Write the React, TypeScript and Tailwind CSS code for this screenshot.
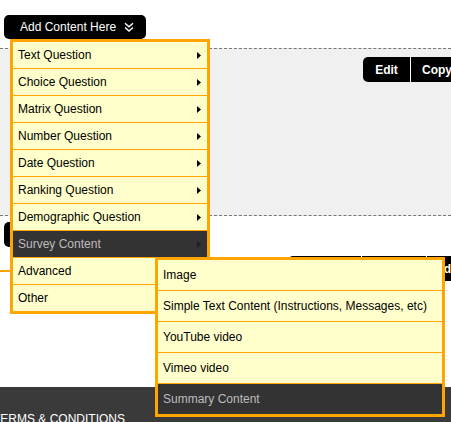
import React from "react";

const mainItems = [
  "Text Question",
  "Choice Question",
  "Matrix Question",
  "Number Question",
  "Date Question",
  "Ranking Question",
  "Demographic Question",
  "Survey Content",
  "Advanced",
  "Other",
];

const subItems = [
  "Image",
  "Simple Text Content (Instructions, Messages, etc)",
  "YouTube video",
  "Vimeo video",
  "Summary Content",
];

function Arrow({ dark }: { dark?: boolean }) {
  return (
    <svg width="4" height="7" viewBox="0 0 4 7" className="flex-none">
      <polygon points="0,0 4,3.5 0,7" fill={dark ? "#1e1e1e" : "#000"} />
    </svg>
  );
}

function Chevrons() {
  return (
    <svg
      width="10"
      height="10"
      viewBox="0 0 10 10"
      fill="none"
      stroke="white"
      strokeWidth={1.4}
      className="ml-2"
    >
      <path d="M1 1.2 L5 4.8 L9 1.2" />
      <path d="M1 5.4 L5 9 L9 5.4" />
    </svg>
  );
}

function SubMenu() {
  return (
    <ul className="absolute left-[142px] top-[26px] z-20 w-[290px] border-[3px] border-[#ffa500] bg-[#ffffcc]">
      {subItems.map((label) => {
        const active = label === "Summary Content";
        return (
          <li
            key={label}
            className={`flex h-[31px] items-center border-b border-[#ffa500] pl-[5px] last:h-[30px] last:border-b-0 ${
              active ? "bg-[#333333] text-[#bdbdbd]" : "text-black"
            }`}
          >
            {label}
          </li>
        );
      })}
    </ul>
  );
}

function Menu() {
  return (
    <ul className="absolute left-[6px] top-full z-10 w-[200px] border-[3px] border-[#ffa500] bg-[#ffffcc]">
      {mainItems.map((label) => {
        const active = label === "Survey Content";
        return (
          <li
            key={label}
            className={`relative flex h-[27px] items-center justify-between border-b border-[#ffa500] pl-[5px] pr-[6px] last:h-[26px] last:border-b-0 ${
              active ? "bg-[#333333] text-[#bdbdbd]" : "text-black"
            }`}
          >
            <span>{label}</span>
            {label !== "Other" && <Arrow dark={active} />}
            {active && <SubMenu />}
          </li>
        );
      })}
    </ul>
  );
}

export default function App() {
  return (
    <div className="relative h-[422px] w-full overflow-hidden bg-white font-['Liberation_Sans',Arial,sans-serif] text-[12px] leading-none">
      {/* top bar with dropdown button */}
      <div className="h-[48px] pl-1 pt-[15px]">
        <div className="relative w-max">
          <button className="flex h-[24px] w-[142px] items-center rounded-[5px] bg-black pl-4 text-white">
            Add Content Here
            <Chevrons />
          </button>
          <Menu />
        </div>
      </div>

      {/* question block */}
      <section className="h-[168px] border-y border-dashed border-[#777777] bg-[#f0f0f0] pt-[8px]">
        <div className="ml-[363px] flex h-[25px] w-max overflow-hidden rounded-l-[5px] bg-black font-bold text-white">
          <span className="flex w-[47px] items-center justify-center">Edit</span>
          <span className="flex items-center border-l border-white px-[11px]">Copy</span>
        </div>
      </section>

      {/* area under the block */}
      <div className="h-[165px]">
        <div className="ml-1 mt-[6px] h-[25px] w-[150px] rounded-l-[5px] bg-black" />
        <div className="mt-[9px] flex items-start">
          <div className="mt-[14px] h-[2px] w-[12px] flex-none bg-[#ffa500]" />
          <div className="ml-[277px] flex h-[25px] w-max flex-none rounded-l-[4px] bg-black font-bold text-white">
            <span className="flex w-[72px] items-center justify-center">Move</span>
            <span className="flex w-[65px] items-center justify-center border-l border-white">Delete</span>
            <span className="flex items-center border-l border-white pl-[8px] pr-3">Add Page</span>
          </div>
        </div>
      </div>

      {/* footer */}
      <footer className="flex h-[41px] items-start justify-between bg-[#3a3a3a]">
        <span className="ml-[-7px] mt-[26px] text-[12px] text-white">TERMS &amp; CONDITIONS</span>
        <span className="mt-[35px] text-[13px] text-[#ff9900] underline">Logo</span>
      </footer>
    </div>
  );
}
